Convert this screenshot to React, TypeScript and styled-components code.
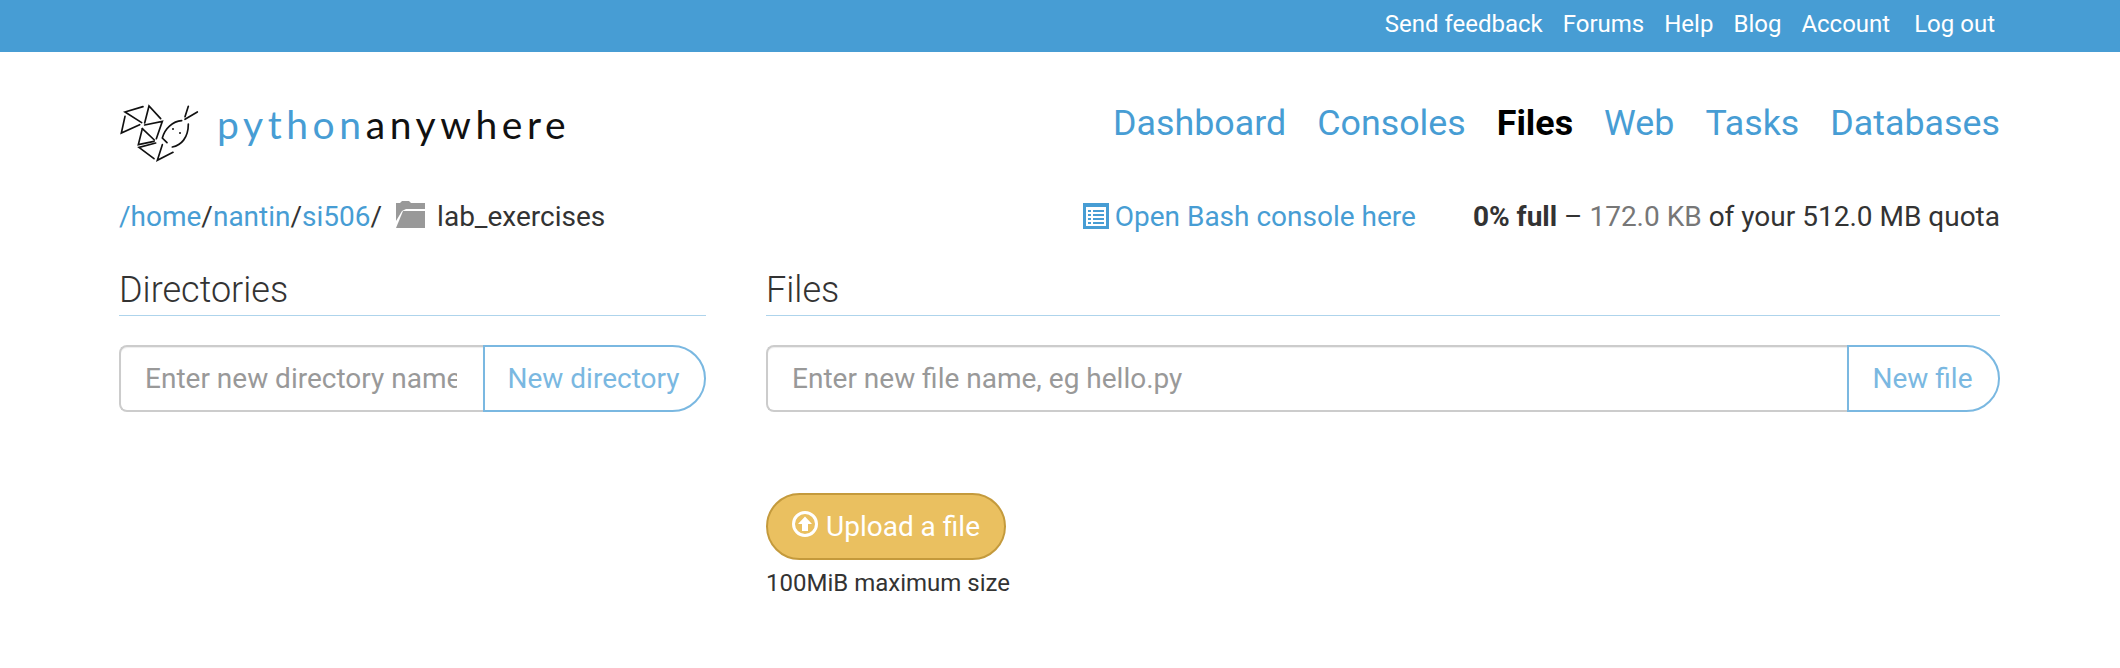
import React from 'react';
import styled, { createGlobalStyle } from 'styled-components';

const GlobalStyle = createGlobalStyle`
  html, body {
    margin: 0;
    padding: 0;
    background: #fff;
    font-family: Roboto, "Liberation Sans", sans-serif;
    color: #333;
  }
`;

const TopBar = styled.div`
  height: 52px;
  background: #479dd4;
  display: flex;
  align-items: center;
  justify-content: flex-end;
  padding: 0 125px 0 0;
`;

const TopLink = styled.a<{ $gap?: number }>`
  color: #fff;
  font-size: 24px;
  margin-left: ${(p) => p.$gap ?? 20}px;
  position: relative;
  top: -2px;
`;

const Page = styled.div`
  padding: 0 120px 0 119px;
`;

const Header = styled.div`
  height: 142px;
  display: flex;
  align-items: center;
  justify-content: space-between;
`;

const Logo = styled.div`
  display: flex;
  align-items: center;
  margin-top: 2px;
`;

const LogoSvg = styled.svg`
  transform: translateY(9px);
`;

const LogoText = styled.div`
  font-family: Lato, sans-serif;
  font-weight: 400;
  font-size: 39px;
  letter-spacing: 4.6px;
  margin-left: 17px;
  color: #111;
  line-height: 1;
`;

const LogoBlue = styled.span`
  color: #479dd4;
`;

const Nav = styled.nav`
  display: flex;
  gap: 31px;
`;

const NavLink = styled.a<{ $active?: boolean }>`
  font-size: 35.8px;
  color: ${(p) => (p.$active ? '#000' : '#479dd4')};
  font-weight: ${(p) => (p.$active ? 700 : 400)};
`;

const PathRow = styled.div`
  display: flex;
  align-items: center;
  justify-content: space-between;
  height: 44px;
  font-size: 28px;
`;

const Breadcrumb = styled.div`
  display: flex;
  align-items: center;
`;

const Crumb = styled.a`
  color: #479dd4;
`;

const CurrentDir = styled.span`
  margin-left: 12px;
  color: #333;
`;

const FolderIcon = styled.svg`
  width: 29px;
  height: 27px;
  margin-left: 14px;
  fill: #999;
  position: relative;
  top: -2px;
`;

const PathActions = styled.div`
  display: flex;
  align-items: center;
`;

const ConsoleLink = styled.a`
  color: #479dd4;
  display: flex;
  align-items: center;
  gap: 6px;
  margin-right: 57px;
`;

const Muted = styled.span`
  color: #777;
`;

const Columns = styled.div`
  display: grid;
  grid-template-columns: 587px 1fr;
  column-gap: 60px;
  margin-top: 32px;
`;

const SectionTitle = styled.h2`
  margin: 0 0 29px;
  padding-bottom: 5px;
  font-size: 36px;
  font-weight: 300;
  line-height: 40px;
  color: #333;
  border-bottom: 1px solid #aed4ec;
`;

const InputGroup = styled.div`
  display: flex;
  height: 67px;
`;

const NameInput = styled.input`
  flex: 1;
  min-width: 0;
  box-sizing: border-box;
  height: 67px;
  border: 2px solid #ccc;
  border-right: none;
  border-radius: 8px 0 0 8px;
  box-shadow: inset 0 1px 1px rgba(0, 0, 0, 0.075);
  padding: 0 26px 0 24px;
  font-family: inherit;
  font-size: 28px;
  color: #333;
  outline: none;
  &::placeholder {
    color: #999;
    opacity: 1;
  }
`;

const AddButton = styled.button<{ $width: number }>`
  width: ${(p) => p.$width}px;
  box-sizing: border-box;
  height: 67px;
  background: #fff;
  border: 2px solid #7ab8e1;
  border-radius: 0 34px 34px 0;
  font-family: inherit;
  font-size: 28px;
  color: #7ab8e1;
  padding: 0 2px 0 0;
`;

const UploadArea = styled.div`
  margin-top: 81px;
`;

const UploadButton = styled.button`
  width: 240px;
  height: 67px;
  box-sizing: border-box;
  display: flex;
  align-items: center;
  justify-content: center;
  gap: 8px;
  background: #eac060;
  border: 2px solid #c49a3c;
  border-radius: 34px;
  color: #fff;
  font-family: inherit;
  font-size: 28px;
  padding: 0;
`;

const UploadIcon = styled.svg`
  width: 26px;
  height: 26px;
  margin-top: -5px;
`;

const UploadNote = styled.div`
  margin-top: 9px;
  font-size: 24px;
  line-height: 28px;
  color: #333;
`;

const LogoMark = () => (
  <LogoSvg width="81" height="59" viewBox="60 68 243 177" fill="none" stroke="#111" strokeWidth="5" strokeLinecap="round">
    <path d="M132 76 L78 92 L128 124" />
    <path d="M78 105 L67 155 L122 130" />
    <path d="M185 112 L150 74 L137 125" />
    <path d="M137 131 L190 120 L172 172" />
    <path d="M130 142 L166 176" />
    <path d="M130 142 L118 190 L165 180" />
    <path d="M170 185 L120 198 L165 232" />
    <path d="M190 190 L175 237 L222 213" />
    <path d="M248 118 C222 120 198 140 190 170 L204 184" />
    <path d="M220 197 C246 192 268 170 268 128" />
    <path d="M258 114 L295 92" />
    <path d="M258 106 L268 75" />
    <circle cx="222" cy="143" r="3" fill="#111" stroke="none" />
    <circle cx="243" cy="155" r="3" fill="#111" stroke="none" />
  </LogoSvg>
);

const ListIcon = () => (
  <svg width="26" height="26" viewBox="0 0 26 26">
    <path fill="#479dd4" fillRule="evenodd" d="M0 0H26V26H0Z M3 4V23H23V4Z" />
    <path
      fill="#479dd4"
      d="M5 7H8V9H5Z M10 7H21V9H10Z M5 11H8V13H5Z M10 11H21V13H10Z M5 15H8V17H5Z M10 15H21V17H10Z M5 19H8V21H5Z M10 19H21V21H10Z"
    />
  </svg>
);

const App: React.FC = () => (
  <>
    <GlobalStyle />
    <TopBar>
      <TopLink>Send feedback</TopLink>
      <TopLink>Forums</TopLink>
      <TopLink>Help</TopLink>
      <TopLink>Blog</TopLink>
      <TopLink>Account</TopLink>
      <TopLink $gap={24}>Log out</TopLink>
    </TopBar>
    <Page>
      <Header>
        <Logo>
          <LogoMark />
          <LogoText>
            <LogoBlue>python</LogoBlue>anywhere
          </LogoText>
        </Logo>
        <Nav>
          <NavLink>Dashboard</NavLink>
          <NavLink>Consoles</NavLink>
          <NavLink $active>Files</NavLink>
          <NavLink>Web</NavLink>
          <NavLink>Tasks</NavLink>
          <NavLink>Databases</NavLink>
        </Nav>
      </Header>
      <PathRow>
        <Breadcrumb>
          <Crumb>/home</Crumb>/<Crumb>nantin</Crumb>/<Crumb>si506</Crumb>/
          <FolderIcon viewBox="0 0 29 27">
            <path d="M0 2 H4 L6 0 H13 L15 2 H29 V8 H10 L6 10 L0 20 Z" />
            <path d="M7 10 H29 V27 H0 Z" />
          </FolderIcon>
          <CurrentDir>lab_exercises</CurrentDir>
        </Breadcrumb>
        <PathActions>
          <ConsoleLink>
            <ListIcon />
            Open Bash console here
          </ConsoleLink>
          <span>
            <b>0% full</b> – <Muted>172.0 KB</Muted> of your 512.0 MB quota
          </span>
        </PathActions>
      </PathRow>
      <Columns>
        <div>
          <SectionTitle>Directories</SectionTitle>
          <InputGroup>
            <NameInput placeholder="Enter new directory name" />
            <AddButton $width={223}>New directory</AddButton>
          </InputGroup>
        </div>
        <div>
          <SectionTitle>Files</SectionTitle>
          <InputGroup>
            <NameInput placeholder="Enter new file name, eg hello.py" />
            <AddButton $width={153}>New file</AddButton>
          </InputGroup>
          <UploadArea>
            <UploadButton>
              <UploadIcon viewBox="0 0 26 26">
                <circle cx="13" cy="13" r="11.5" fill="none" stroke="#fff" strokeWidth="3" />
                <path fill="#fff" d="M13 5.5 L20 13 H16 V20 H10 V13 H6 Z" />
              </UploadIcon>
              Upload a file
            </UploadButton>
            <UploadNote>100MiB maximum size</UploadNote>
          </UploadArea>
        </div>
      </Columns>
    </Page>
  </>
);

export default App;
